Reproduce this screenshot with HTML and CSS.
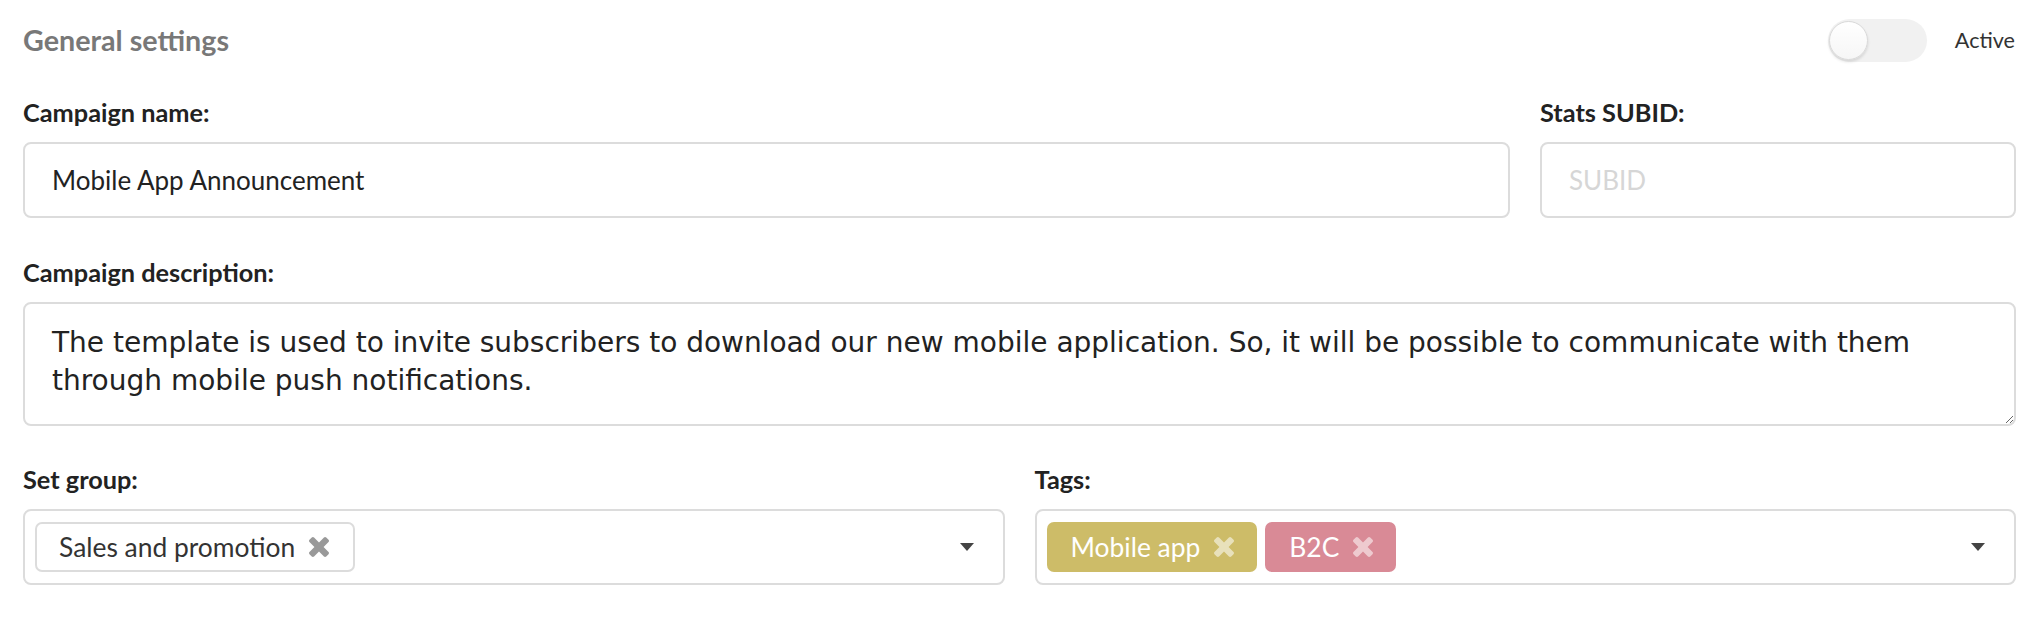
FILE: index.html
```html
<!DOCTYPE html>
<html lang="en">
<head>
<meta charset="utf-8">
<title>General settings</title>
<link rel="stylesheet" href="styles.css">
</head>
<body>
<div class="page">
  <header class="head">
    <h2 class="title">General settings</h2>
    <div class="switch-wrap">
      <span class="switch"><span class="knob"></span></span>
      <span class="switch-label">Active</span>
    </div>
  </header>

  <div class="row row-first">
    <div class="field grow">
      <label class="label">Campaign name:</label>
      <input class="input" type="text" value="Mobile App Announcement">
    </div>
    <div class="field side">
      <label class="label">Stats SUBID:</label>
      <input class="input" type="text" placeholder="SUBID">
    </div>
  </div>

  <div class="row row-mid">
    <div class="field grow">
      <label class="label">Campaign description:</label>
      <textarea class="textarea">The template is used to invite subscribers to download our new mobile application. So, it will be possible to communicate with them through mobile push notifications.</textarea>
    </div>
  </div>

  <div class="row row-last">
    <div class="field half">
      <label class="label">Set group:</label>
      <div class="select">
        <span class="chip plain">Sales and promotion
          <svg class="x" viewBox="302 366 1188 1188"><path d="M1490 1322q0 40-28 68l-136 136q-28 28-68 28t-68-28l-294-294-294 294q-28 28-68 28t-68-28l-136-136q-28-28-28-68t28-68l294-294-294-294q-28-28-28-68t28-68l136-136q28-28 68-28t68 28l294 294 294-294q28-28 68-28t68 28l136 136q28 28 28 68t-28 68l-294 294 294 294q28 28 28 68z"/></svg>
        </span>
        <span class="caret"></span>
      </div>
    </div>
    <div class="field half">
      <label class="label">Tags:</label>
      <div class="select">
        <span class="chip gold">Mobile app
          <svg class="x" viewBox="302 366 1188 1188"><path d="M1490 1322q0 40-28 68l-136 136q-28 28-68 28t-68-28l-294-294-294 294q-28 28-68 28t-68-28l-136-136q-28-28-28-68t28-68l294-294-294-294q-28-28-28-68t28-68l136-136q28-28 68-28t68 28l294 294 294-294q28-28 68-28t68 28l136 136q28 28 28 68t-28 68l-294 294 294 294q28 28 28 68z"/></svg>
        </span>
        <span class="chip pink">B2C
          <svg class="x" viewBox="302 366 1188 1188"><path d="M1490 1322q0 40-28 68l-136 136q-28 28-68 28t-68-28l-294-294-294 294q-28 28-68 28t-68-28l-136-136q-28-28-28-68t28-68l294-294-294-294q-28-28-28-68t28-68l136-136q28-28 68-28t68 28l294 294 294-294q28-28 68-28t68 28l136 136q28 28 28 68t-28 68l-294 294 294 294q28 28 28 68z"/></svg>
        </span>
        <span class="caret"></span>
      </div>
    </div>
  </div>
</div>
</body>
</html>
```

FILE: styles.css
```css
body {
  margin: 0;
  font-family: Lato, "Noto Sans", sans-serif;
  color: #222;
  background: #fff;
}

.page {
  padding: 0 22px 0 23px;
}

.head {
  height: 80px;
  display: flex;
  align-items: center;
  justify-content: space-between;
}

.title {
  margin: 0;
  font-size: 28.7px;
  font-weight: 700;
  color: #787878;
}

.switch-wrap {
  display: flex;
  align-items: center;
  gap: 28px;
  padding-right: 1px;
}

.switch {
  width: 99px;
  height: 43px;
  box-sizing: border-box;
  border-radius: 22px;
  background: #f1f1f1;
  display: flex;
  align-items: center;
  padding: 0 1px;
}

.knob {
  width: 39px;
  height: 39px;
  box-sizing: border-box;
  border-radius: 50%;
  background: linear-gradient(#fff, #f6f6f6);
  border: 1px solid #d9d9d9;
  box-shadow: 0 2px 3px rgba(0, 0, 0, 0.12);
}

.switch-label {
  font-size: 21.6px;
  color: #333;
}

.row {
  display: flex;
  gap: 30px;
}

.row-first { margin-top: 17px; }
.row-mid { margin-top: 39px; }
.row-last { margin-top: 38px; }

.field.grow { flex: 1; }
.field.side { width: 476px; }
.field.half { flex: 1; min-width: 0; }

.label {
  display: block;
  font-size: 25.3px;
  line-height: 30px;
  font-weight: 700;
  color: #222;
  margin-bottom: 15px;
}

.input {
  display: block;
  box-sizing: border-box;
  width: 100%;
  height: 76px;
  margin: 0;
  border: 2px solid #dcdcdc;
  border-radius: 8px;
  padding: 0 27px;
  font-family: Lato, "Noto Sans", sans-serif;
  font-size: 26px;
  color: #222;
  outline: none;
}

.input::placeholder {
  color: #d6d6d6;
}

.textarea {
  display: block;
  box-sizing: border-box;
  width: 100%;
  height: 124px;
  margin: 0;
  border: 2px solid #dcdcdc;
  border-radius: 8px;
  padding: 20px 27px;
  font-family: "DejaVu Sans", sans-serif;
  font-size: 28px;
  line-height: 38px;
  color: #222;
  resize: vertical;
  outline: none;
}

.select {
  box-sizing: border-box;
  height: 76px;
  border: 2px solid #dcdcdc;
  border-radius: 8px;
  display: flex;
  align-items: center;
  gap: 8px;
  padding: 0 29px 0 10px;
}

.chip {
  box-sizing: border-box;
  height: 50px;
  border-radius: 7px;
  display: flex;
  align-items: center;
  gap: 14px;
  padding: 0 23px 0 24px;
  font-size: 26.4px;
}

.chip.plain {
  border: 2px solid #dcdcdc;
  color: #333;
  padding-left: 22px;
  padding-right: 24px;
}
.chip.plain .x { fill: #999; }

.chip.gold { background: #cdbc68; color: #fff; }
.chip.pink { background: #d98a96; color: #fff; }
.chip.gold .x, .chip.pink .x { fill: rgba(255, 255, 255, 0.55); }

.x {
  width: 20px;
  height: 20px;
  flex: none;
}

.caret {
  margin-left: auto;
  width: 0;
  height: 0;
  border-left: 7px solid transparent;
  border-right: 7px solid transparent;
  border-top: 8px solid #444;
}
```
